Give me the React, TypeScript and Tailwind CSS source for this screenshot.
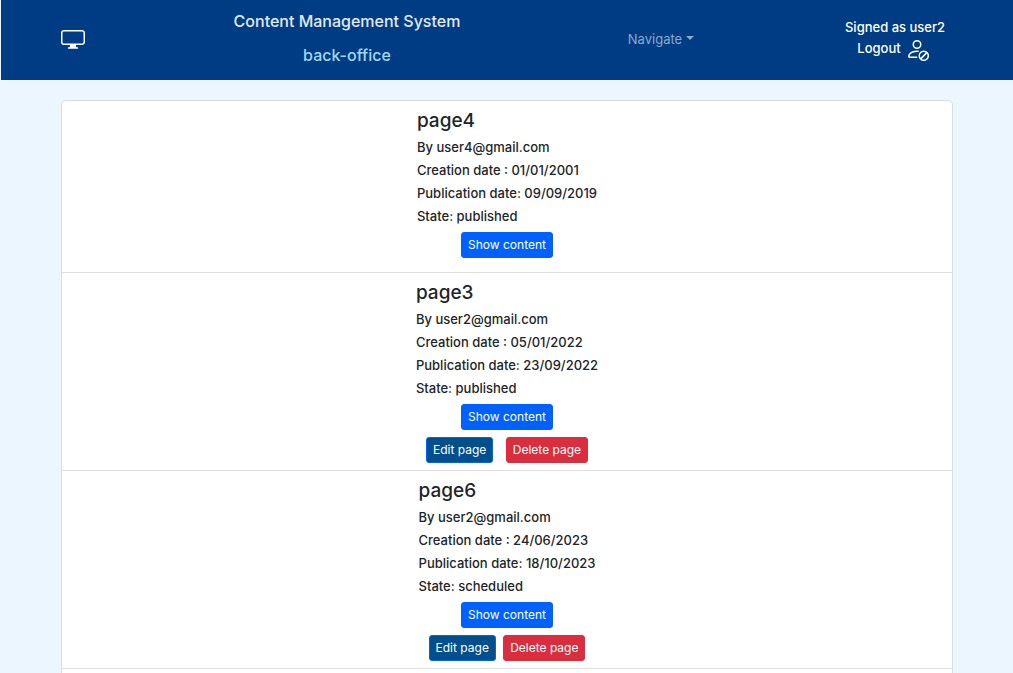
import { BsDisplay, BsPersonSlash } from "react-icons/bs";

type Page = {
  title: string;
  author: string;
  created: string;
  published: string;
  state: string;
  editable: boolean;
};

const pages: Page[] = [
  { title: "page4", author: "user4@gmail.com", created: "01/01/2001", published: "09/09/2019", state: "published", editable: false },
  { title: "page3", author: "user2@gmail.com", created: "05/01/2022", published: "23/09/2022", state: "published", editable: true },
  { title: "page6", author: "user2@gmail.com", created: "24/06/2023", published: "18/10/2023", state: "scheduled", editable: true },
];

const button = "h-[26px] rounded-[3px] border px-[6px] text-[12px] leading-4 font-normal whitespace-nowrap text-white";

function Header() {
  return (
    <header className="flex h-20 shrink-0 items-center border-l border-[#ebf6ff] bg-[#003c84] px-15 pb-0.5">
      <a href="#home" aria-label="Home" className="w-[86px] shrink-0 text-white">
        <BsDisplay size={24} />
      </a>
      <div className="flex flex-[400] flex-col items-center gap-2.5 pb-0.5 text-[16px] leading-6 font-medium whitespace-nowrap">
        <span className="text-[#e3e9ef]">Content Management System</span>
        <span className="text-[#9fd9f6]">back-office</span>
      </div>
      <nav className="flex flex-[228] justify-center">
        <button type="button" className="flex items-center gap-1 text-[13px] leading-5 text-[#8ca8cb]">
          Navigate
          <svg width="8" height="4" viewBox="0 0 8 4" fill="currentColor" aria-hidden="true" className="mb-0.5">
            <path d="M0 0h8L4 4z" />
          </svg>
        </button>
      </nav>
      <div className="flex flex-[170] justify-end pr-2">
        <div className="flex flex-col items-center text-[13px] font-medium whitespace-nowrap text-white">
          <span className="leading-5">Signed as user2</span>
          <a href="#logout" className="flex gap-1 pr-1 leading-[22px]">
            Logout
            <BsPersonSlash size={24} />
          </a>
        </div>
      </div>
    </header>
  );
}

function PageItem({ page }: { page: Page }) {
  return (
    <li className="flex justify-center border-b border-[#dfe0e1] pt-2 pb-[7px]">
      <article className="flex flex-col text-[13px] leading-[23px] font-medium text-[#212529]">
        <h2 className="mb-[3px] text-[19px] leading-6 font-medium">{page.title}</h2>
        <p>By {page.author}</p>
        <p>Creation date : {page.created}</p>
        <p>Publication date: {page.published}</p>
        <p>State: {page.state}</p>
        <button type="button" className={`${button} mt-1 mb-[7px] self-center border-[#0061fd] bg-[#0061fd]`}>
          Show content
        </button>
        {page.editable && (
          <div className="flex justify-between px-2.5">
            <button type="button" className={`${button} border-[#0061fd] bg-[#024f8e]`}>
              Edit page
            </button>
            <button type="button" className={`${button} border-[#da2d3e] bg-[#da2d3e]`}>
              Delete page
            </button>
          </div>
        )}
      </article>
    </li>
  );
}

export default function App() {
  return (
    <div className="flex h-screen flex-col overflow-hidden bg-[#ebf6ff] font-['Inter','Liberation_Sans',sans-serif]">
      <Header />
      <main className="pt-5 pr-15 pl-[61px]">
        <ul className="rounded-[5px] border border-[#d6dfe5] bg-white">
          {pages.map((page) => (
            <PageItem key={page.title} page={page} />
          ))}
          <li className="h-10" />
        </ul>
      </main>
    </div>
  );
}
